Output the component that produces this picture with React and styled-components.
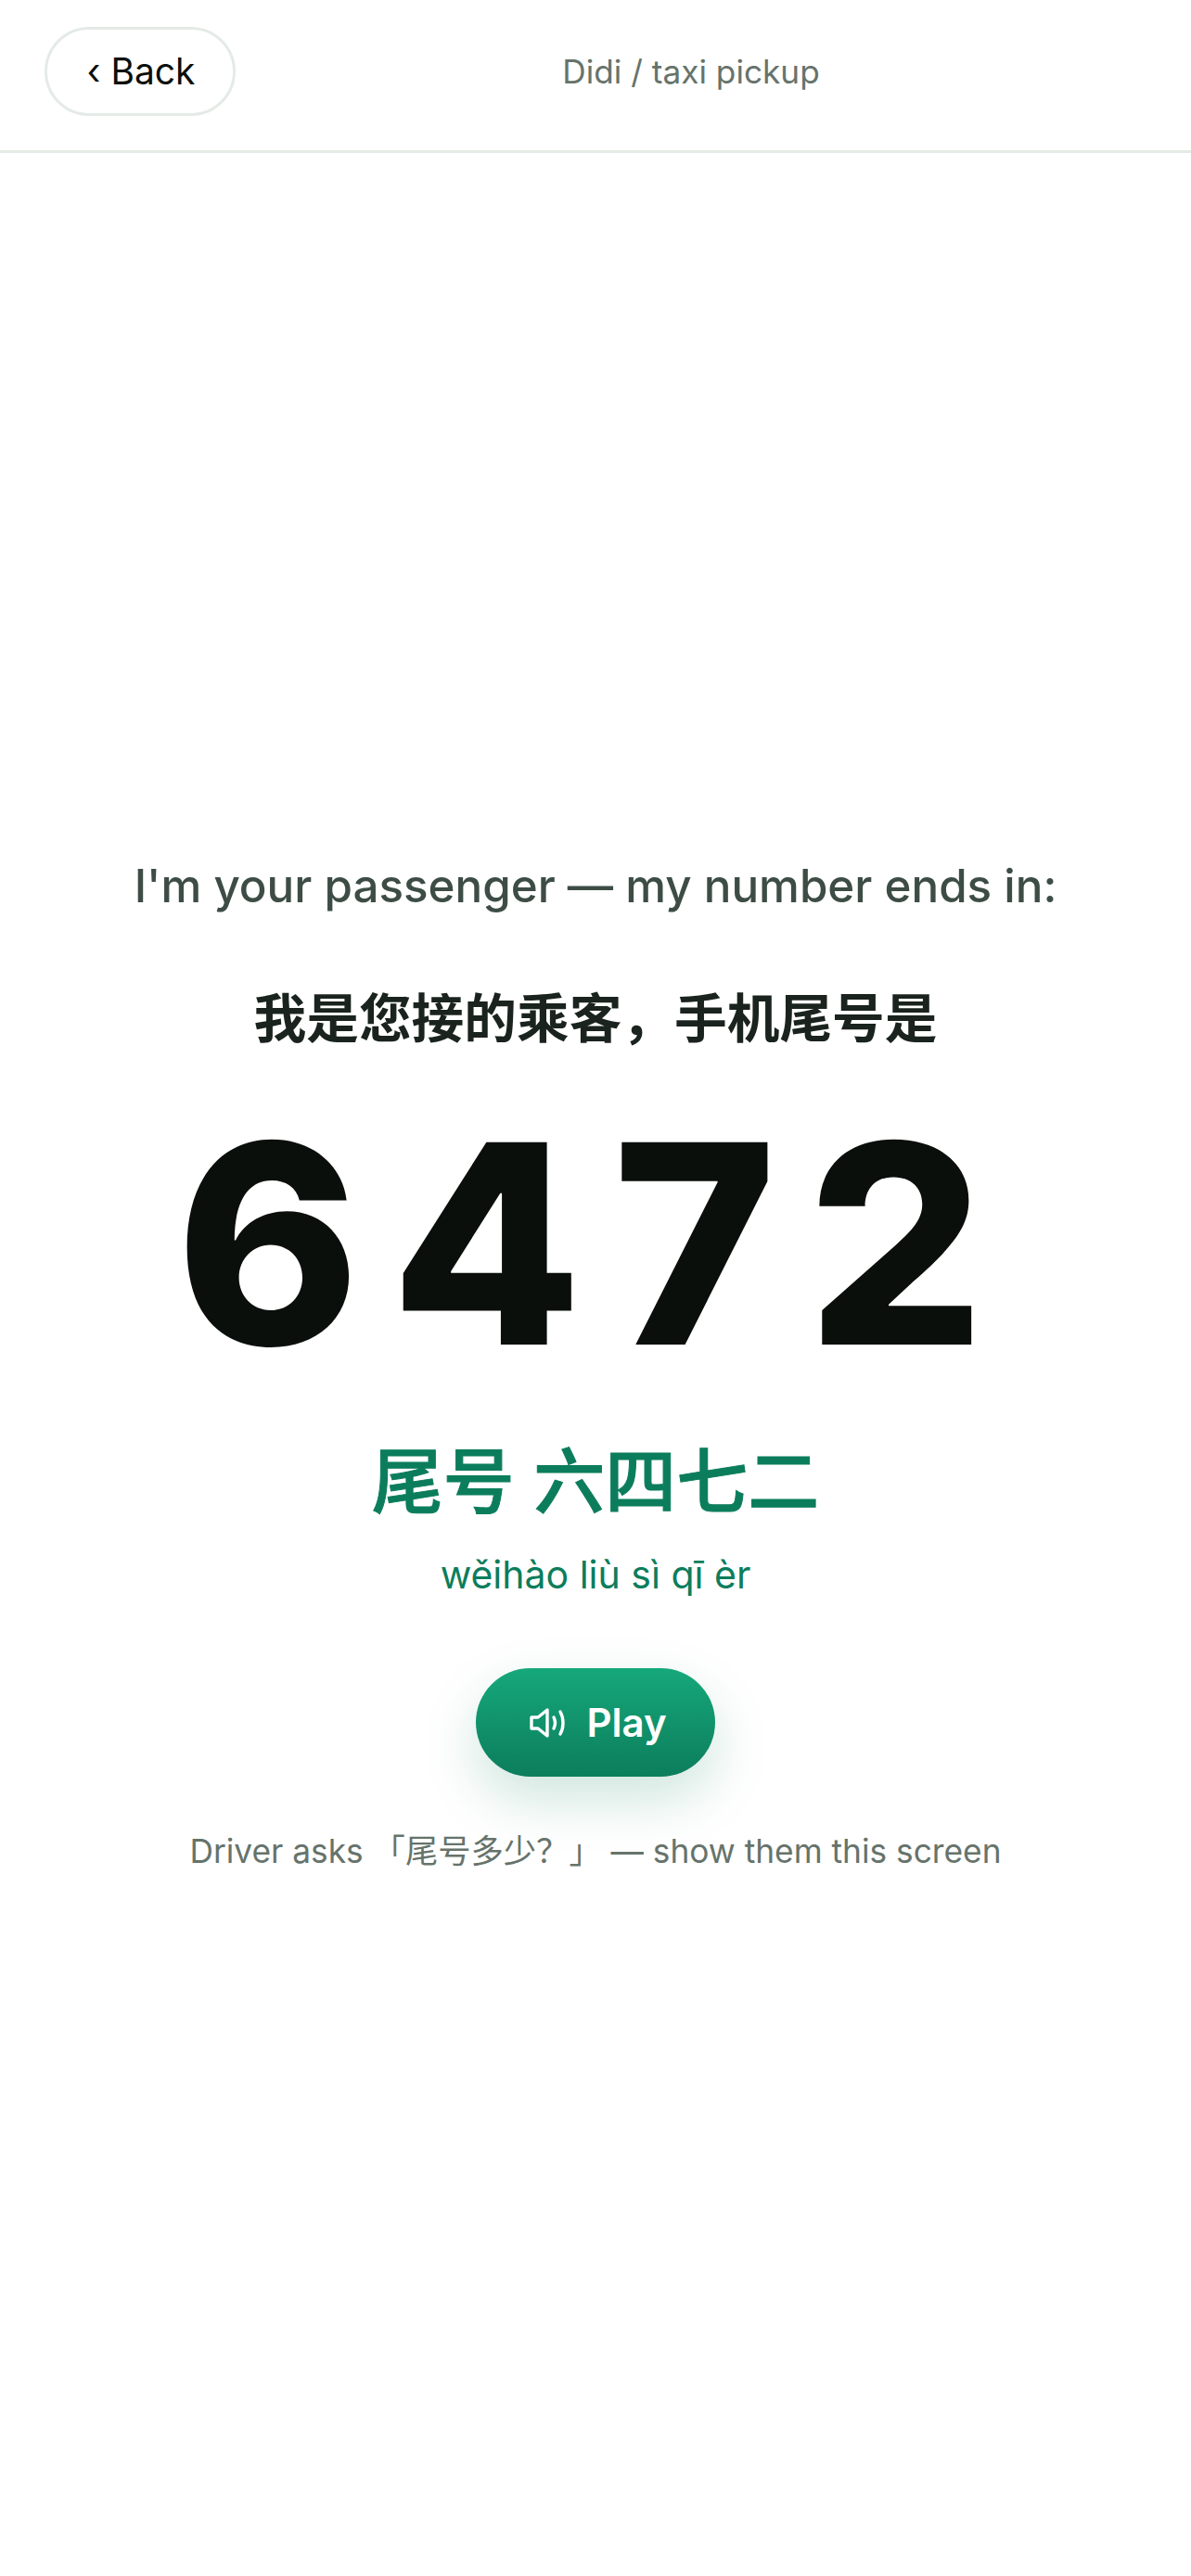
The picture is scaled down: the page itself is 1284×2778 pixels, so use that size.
import React from "react";
import styled, { createGlobalStyle } from "styled-components";

const Global = createGlobalStyle`
  html, body { margin: 0; padding: 0; background: #fff; }
  body { font-family: Inter, "Noto Sans CJK SC", sans-serif; }
`;
const Page = styled.div`
  min-height: 2778px;
  display: flex;
  flex-direction: column;
  box-sizing: border-box;
`;
const Header = styled.header`
  height: 165px;
  box-sizing: border-box;
  border-bottom: 3px solid #e4ebe6;
  display: flex;
  align-items: center;
  padding: 0 48px;
`;
const BackButton = styled.button`
  width: 206px;
  height: 96px;
  margin-top: -9px;
  border: 3px solid #e4ebe6;
  border-radius: 48px;
  background: #fff;
  color: #0b0f0c;
  font: 400 39px Inter, sans-serif;
  padding: 0 0 0 2px;
`;
const Crumb = styled.div`
  flex: 1;
  margin-top: -9px;
  text-align: center;
  font-size: 35.2px;
  color: #66736b;
`;
const Main = styled.main`
  flex: 1;
  display: flex;
  flex-direction: column;
  align-items: center;
  justify-content: center;
`;
const Lead = styled.div`
  font-size: 49.3px;
  line-height: 72px;
  font-weight: 450;
  color: #3d4d45;
`;
const Phrase = styled.div`
  margin-top: 72px;
  font-size: 56.7px;
  line-height: 72px;
  font-weight: 700;
  color: #1a231e;
`;
const Digits = styled.div`
  margin-top: 56px;
  font-size: 300px;
  line-height: 300px;
  font-weight: 800;
  letter-spacing: 33px;
  color: #0b0f0c;
`;
const Reading = styled.div`
  margin-top: 59px;
  font-size: 77px;
  line-height: 96px;
  font-weight: 500;
  -webkit-text-stroke: 1px #0c7d5c;
  color: #0c7d5c;
`;
const Pinyin = styled.div`
  margin-top: 22px;
  font-size: 41px;
  line-height: 60px;
  font-weight: 440;
  color: #0c7d5c;
`;
const PlayButton = styled.button`
  margin-top: 71px;
  width: 258px;
  height: 117px;
  border: 0;
  border-radius: 59px;
  background: linear-gradient(180deg, #16a87a, #0c7d5c);
  box-shadow: 0 24px 60px rgba(12, 125, 92, 0.2);
  color: #fff;
  font: 600 42px Inter, sans-serif;
  display: flex;
  align-items: center;
  justify-content: center;
  gap: 21px;
  padding: 0 0 0 6px;
`;
const Note = styled.div`
  margin-top: 54px;
  font-size: 35.3px;
  line-height: 54px;
  color: #66736b;
`;

const Speaker = () => (
  <svg width="40" height="32" viewBox="0 0 40 32" fill="none" stroke="#fff" strokeWidth="3.4" strokeLinecap="round" strokeLinejoin="round">
    <path d="M19 2 9 10H2v12h7l10 8z" />
    <path d="M26 10c2 4 2 8 0 12" />
    <path d="M33 4c4 7 4 17 0 24" />
  </svg>
);

export default function App() {
  return (
    <Page>
      <Global />
      <Header>
        <BackButton>‹ Back</BackButton>
        <Crumb>Didi / taxi pickup</Crumb>
      </Header>
      <Main>
        <Lead>I'm your passenger — my number ends in:</Lead>
        <Phrase>我是您接的乘客，手机尾号是</Phrase>
        <Digits>6472</Digits>
        <Reading>尾号 六四七二</Reading>
        <Pinyin>wěihào liù sì qī èr</Pinyin>
        <PlayButton><Speaker />Play</PlayButton>
        <Note>Driver asks 「尾号多少？」 — show them this screen</Note>
      </Main>
    </Page>
  );
}
